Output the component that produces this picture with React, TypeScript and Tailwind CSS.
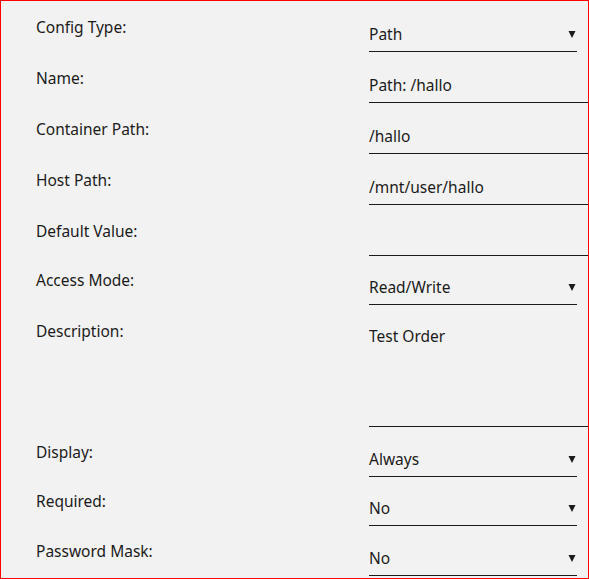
import React from 'react';

type Field = {
  label: string;
  value: string;
  select?: boolean;
  tall?: boolean;
  gap: string;
};

const fields: Field[] = [
  { label: 'Config Type:', value: 'Path', select: true, gap: 'mt-[15px]' },
  { label: 'Name:', value: 'Path: /hallo', gap: 'mt-[15px]' },
  { label: 'Container Path:', value: '/hallo', gap: 'mt-[15px]' },
  { label: 'Host Path:', value: '/mnt/user/hallo', gap: 'mt-[15px]' },
  { label: 'Default Value:', value: '', gap: 'mt-[15px]' },
  { label: 'Access Mode:', value: 'Read/Write', select: true, gap: 'mt-[13px]' },
  { label: 'Description:', value: 'Test Order', tall: true, gap: 'mt-[13px]' },
  { label: 'Display:', value: 'Always', select: true, gap: 'mt-[14px]' },
  { label: 'Required:', value: 'No', select: true, gap: 'mt-[13px]' },
  { label: 'Password Mask:', value: 'No', select: true, gap: 'mt-[14px]' },
];

const Arrow = () => (
  <svg width="8" height="8" viewBox="0 0 8 8" className="mt-[6px] mr-[1px] shrink-0">
    <path d="M0.5 1 L7.5 1 L4 8 Z" fill="#1c1b1b" />
  </svg>
);

const Row = ({ f }: { f: Field }) => (
  <div className={`flex items-start ${f.gap}`}>
    <div className={`w-[333px] shrink-0 pt-[1px] leading-[20px] ${f.tall ? 'mt-[2px]' : ''}`}>{f.label}</div>
    <div
      className={`mt-[7px] flex shrink-0 items-start justify-between border-b border-[#1c1b1b] pt-[1px] leading-[20px] ${
        f.select ? 'w-[208px]' : 'w-[240px]'
      } ${f.tall ? 'h-[102px]' : 'h-[29px]'}`}
    >
      <span>{f.value}</span>
      {f.select && <Arrow />}
    </div>
  </div>
);

export default function App() {
  return (
    <div
      className="h-[579px] w-[589px] overflow-hidden border border-[#ff0000] bg-[#f2f2f2] pl-[35px] text-[15.5px] text-[#1c1b1b]"
      style={{ fontFamily: '"Noto Sans", "Open Sans", sans-serif' }}
    >
      {fields.map((f) => (
        <Row key={f.label} f={f} />
      ))}
    </div>
  );
}
